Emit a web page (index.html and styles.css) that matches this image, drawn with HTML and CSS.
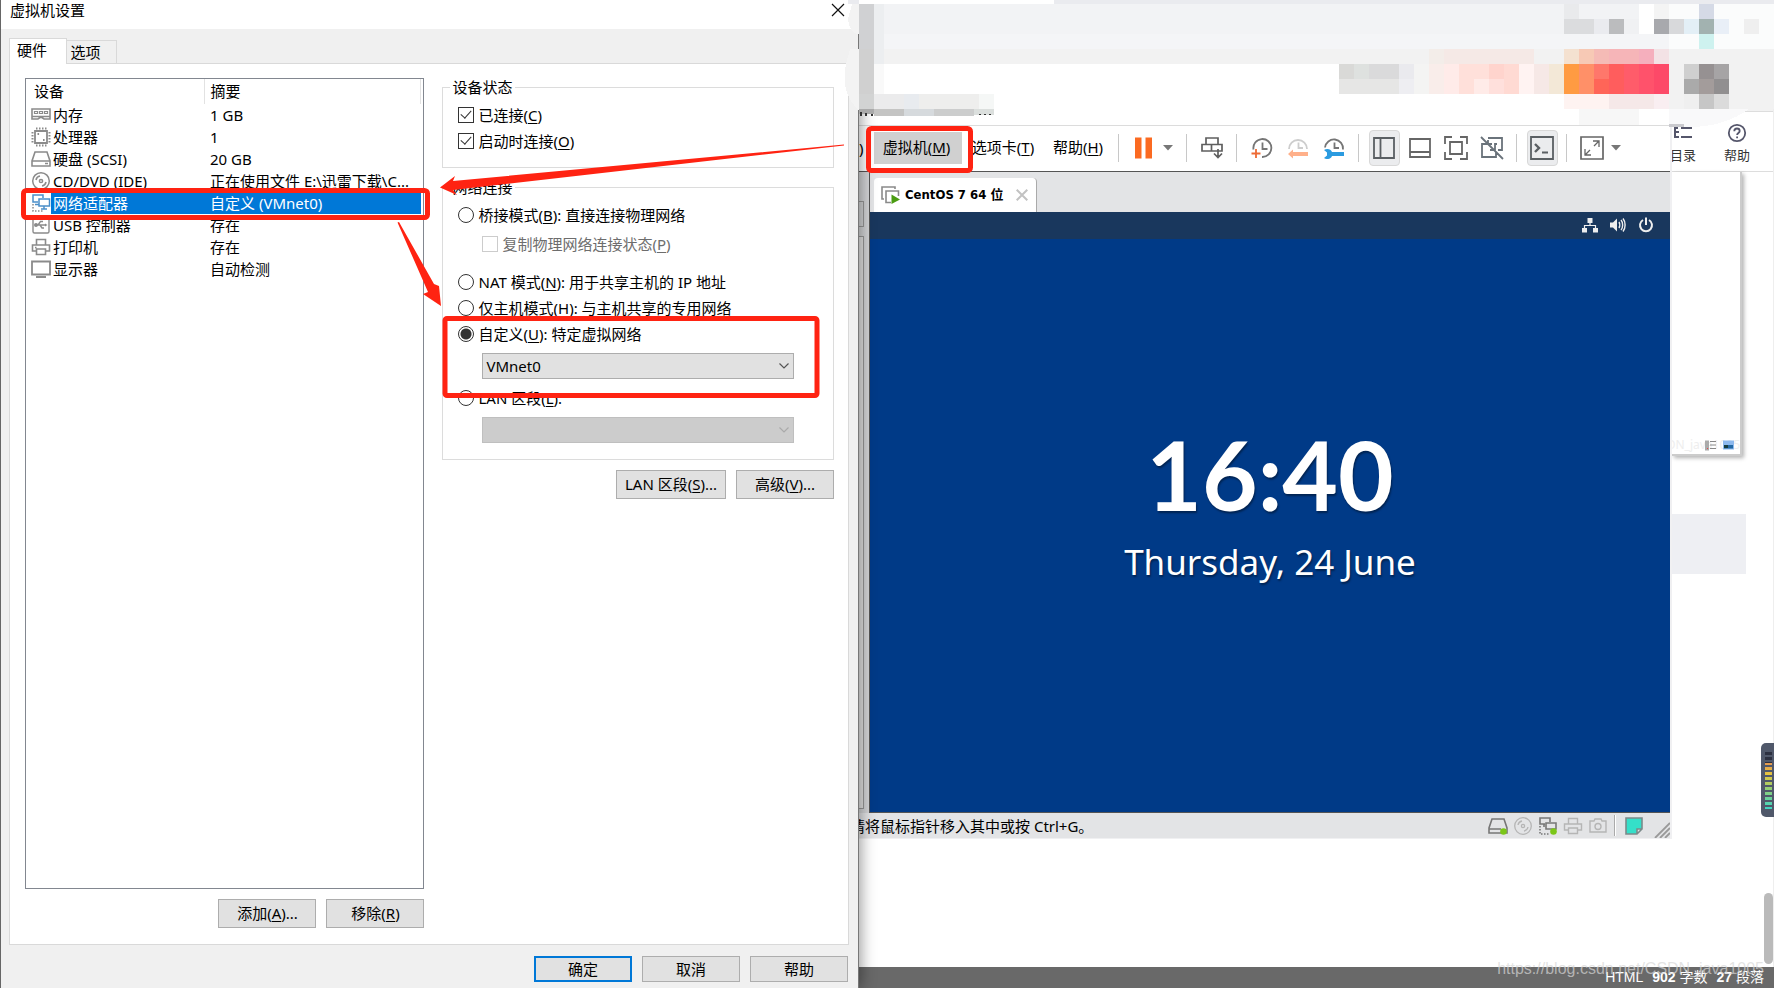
FILE: index.html
```html
<!DOCTYPE html>
<html lang="zh-CN">
<head>
<meta charset="utf-8">
<title>虚拟机设置</title>
<link rel="stylesheet" href="styles.css">
</head>
<body>
<div class="desktop">

<section class="dialog" aria-label="虚拟机设置">
  <header class="dialog-title">
    <span>虚拟机设置</span>
    <button class="close" type="button" aria-label="关闭"><svg width="14" height="14" viewBox="0 0 14 14" fill="none" stroke="#111" stroke-width="1.2"><path d="M1 1l12 12M13 1L1 13"/></svg></button>
  </header>
  <nav class="tabs">
    <button class="tab active" type="button">硬件</button>
    <button class="tab" type="button">选项</button>
  </nav>
  <div class="panel">
    <div class="devices">
      <div class="device-list">
        <table>
          <colgroup><col class="c-icon"><col class="c-name"><col></colgroup>
          <thead><tr><th colspan="2">设备</th><th>摘要</th></tr></thead>
          <tbody>
            <tr><td><svg width="20" height="20" viewBox="0 0 20 20" fill="none" stroke="#8b8b8b" stroke-width="1.6"><path d="M1 4h18v10h-6l-2-1.5H9L7 14H1zM1 11.5h18" /><path d="M3.5 6.5h3v2h-3zM8.5 6.5h3v2h-3zM13.5 6.5h3v2h-3z" stroke-width="1.2"/></svg></td><td>内存</td><td>1 GB</td></tr>
            <tr><td><svg width="20" height="20" viewBox="0 0 20 20" fill="none" stroke="#8b8b8b" stroke-width="1.8"><path d="M4 4h12v12H4z"/><path d="M5 1.5h11M5 18.5h11M1.5 5v11M18.5 5v11" stroke-dasharray="1.5 1.5" stroke-width="2"/><path d="M6.5 7h1.6M12 13h1.6"/></svg></td><td>处理器</td><td>1</td></tr>
            <tr><td><svg width="20" height="20" viewBox="0 0 20 20" fill="none" stroke="#8b8b8b" stroke-width="1.6"><path d="M4 3h12l3 9v5H1v-5zM1 12h18M14 14.5h3"/></svg></td><td>硬盘 (SCSI)</td><td>20 GB</td></tr>
            <tr><td><svg width="20" height="20" viewBox="0 0 20 20" fill="none" stroke="#8b8b8b" stroke-width="1.5"><circle cx="10" cy="10" r="8.3"/><circle cx="10" cy="10" r="1.6"/><path d="M5 9a5 5 0 0 1 4-4M15 11a5 5 0 0 1-4 4"/></svg></td><td>CD/DVD (IDE)</td><td>正在使用文件 E:\迅雷下载\C...</td></tr>
            <tr class="selected"><td><svg width="20" height="20" viewBox="0 0 20 20" fill="none" stroke="#4b8fc9" stroke-width="1.5"><path d="M7 9H2V2h10v3M4 11.5h4"/><path d="M8 6h10.500v7H8zM13 13v3M10 16h6"/><path d="M2 11v7h11" stroke="#8b8b8b" stroke-dasharray="1.5 1.500"/></svg></td><td>网络适配器</td><td>自定义 (VMnet0)</td></tr>
            <tr><td><svg width="20" height="20" viewBox="0 0 20 20" fill="none" stroke="#8b8b8b" stroke-width="1.4"><rect x="2" y="2" width="16" height="16" rx="1.5"/><path d="M4 10h11M7 10l2.500-3.500H12M9 10l2 3h2"/><path d="M14 8.500l2.500 1.500-2.500 1.500z" fill="#8b8b8b" stroke="none"/><circle cx="5" cy="10" r="1.300" fill="#8b8b8b"/></svg></td><td>USB 控制器</td><td>存在</td></tr>
            <tr><td><svg width="20" height="20" viewBox="0 0 20 20" fill="none" stroke="#8b8b8b" stroke-width="1.600"><path d="M5.500 8V2.500h9V8M5.500 14H1.500V8h17v6h-4M5.500 12h9v5.500h-9zM4 10.500h1.500"/></svg></td><td>打印机</td><td>存在</td></tr>
            <tr><td><svg width="20" height="20" viewBox="0 0 20 20" fill="none" stroke="#8b8b8b" stroke-width="1.800"><path d="M1 2.500h18v13H1zM5 18h10"/></svg></td><td>显示器</td><td>自动检测</td></tr>
          </tbody>
        </table>
      </div>
      <div class="row-end">
        <button class="btn tall" type="button">添加(<u>A</u>)...</button>
        <button class="btn tall" type="button">移除(<u>R</u>)</button>
      </div>
    </div>
    <div class="settings">
      <fieldset class="status-box">
        <legend>设备状态</legend>
        <label class="opt"><input type="checkbox" checked><span>已连接(<u>C</u>)</span></label>
        <label class="opt"><input type="checkbox" checked><span>启动时连接(<u>O</u>)</span></label>
      </fieldset>
      <fieldset class="net-box">
        <legend>网络连接</legend>
        <label class="opt"><input type="radio" name="net"><span>桥接模式(<u>B</u>): 直接连接物理网络</span></label>
        <label class="opt sub"><input type="checkbox" disabled><span>复制物理网络连接状态(<u>P</u>)</span></label>
        <label class="opt"><input type="radio" name="net"><span>NAT 模式(<u>N</u>): 用于共享主机的 IP 地址</span></label>
        <label class="opt"><input type="radio" name="net"><span>仅主机模式(<u>H</u>): 与主机共享的专用网络</span></label>
        <label class="opt"><input type="radio" name="net" checked><span>自定义(<u>U</u>): 特定虚拟网络</span></label>
        <div class="combo"><select aria-label="特定虚拟网络"><option>VMnet0</option></select><svg width="10" height="6" viewBox="0 0 10 6" fill="none" stroke="#555" stroke-width="1.200"><path d="M.5.5L5 5 9.500.5"/></svg></div>
        <label class="opt"><input type="radio" name="net"><span>LAN 区段(<u>L</u>):</span></label>
        <div class="combo"><select aria-label="LAN 区段" disabled><option></option></select><svg width="10" height="6" viewBox="0 0 10 6" fill="none" stroke="#aaa" stroke-width="1.200"><path d="M.5.5L5 5 9.500.5"/></svg></div>
      </fieldset>
      <div class="row-end">
        <button class="btn tall wide" type="button">LAN 区段(<u>S</u>)...</button>
        <button class="btn tall" type="button">高级(<u>V</u>)...</button>
      </div>
    </div>
  </div>
  <footer class="dialog-actions">
    <button class="btn default" type="button">确定</button>
    <button class="btn" type="button">取消</button>
    <button class="btn" type="button">帮助</button>
  </footer>
</section>

<section class="vm" aria-label="VMware Workstation">
  <div class="vm-title"></div>
  <div class="toolbar">
    <span class="clipped">)</span>
    <button class="menu open" type="button">虚拟机(<u>M</u>)</button>
    <button class="menu tabs-menu" type="button">选项卡(<u>T</u>)</button>
    <button class="menu help-menu" type="button">帮助(<u>H</u>)</button>
    <i class="sep"></i>
    <button class="tool" type="button" aria-label="暂停"><svg width="18" height="22" viewBox="0 0 18 22" fill="#fb6a21"><path d="M0 .5h6.500v21H0zM10.500.5H17v21h-6.500z"/></svg></button>
    <button class="drop" type="button" aria-label="电源菜单"><svg width="10" height="6" viewBox="0 0 10 6" fill="#777"><path d="M0 0h10L5 5.500z"/></svg></button>
    <i class="sep after-drop"></i>
    <button class="tool" type="button" aria-label="发送按键"><svg width="22" height="22" viewBox="0 0 22 22" fill="none" stroke="#5f5f5f" stroke-width="1.700"><path d="M5 1h12v6.500H5zM1 7.500h20V14H1zM10.500 7.500V14M17 12v8M13 16.500l4 4 4-4"/></svg></button>
    <i class="sep"></i>
    <button class="tool" type="button" aria-label="拍摄快照"><svg width="22" height="22" viewBox="0 0 22 22" fill="none" stroke="#757575" stroke-width="1.800"><path d="M2.500 12.500A9 9 0 1 1 11 20M11.500 5.500v6.500h5"/><path d="M5 12v9M.5 16.500h9" stroke="#ee6b35"/></svg></button>
    <button class="tool" type="button" aria-label="恢复快照"><svg width="22" height="22" viewBox="0 0 22 22" fill="none" stroke="#cdcdcd" stroke-width="1.800"><path d="M2 12a9 9 0 0 1 18 0M11.500 5.500V11h4.500"/><path d="M1 17l5-4.500V15h15v4H6v2.500z" fill="#ffb08a" stroke="none"/></svg></button>
    <button class="tool" type="button" aria-label="管理快照"><svg width="22" height="22" viewBox="0 0 22 22" fill="none" stroke="#757575" stroke-width="1.800"><path d="M2 10.500a9 9 0 0 1 18 2M11.500 5.500V11h4.500"/><path d="M1 13c3-2 7-1 8 2h12v4H9c-1 3-5 4-8 2l3-2.500v-3z" fill="#2b9be0" stroke="none"/></svg></button>
    <i class="sep"></i>
    <button class="tool" type="button" aria-label="显示库"><span class="pressed"><svg width="22" height="22" viewBox="0 0 22 22" fill="none" stroke="#5a5f63" stroke-width="1.800"><path d="M1 1h20v20H1zM7.500 1v20"/></svg></span></button>
    <button class="tool" type="button" aria-label="缩略图栏"><svg width="22" height="22" viewBox="0 0 22 22" fill="none" stroke="#666" stroke-width="1.800"><path d="M1 2h20v18H1zM1 15h20"/></svg></button>
    <button class="tool" type="button" aria-label="全屏"><svg width="24" height="24" viewBox="0 0 24 24" fill="none" stroke="#666" stroke-width="1.800"><path d="M1 8V1h7M16 1h7v7M23 16v7h-7M8 23H1v-7M6 6h12v12H6z"/></svg></button>
    <button class="tool" type="button" aria-label="Unity"><svg width="24" height="24" viewBox="0 0 24 24" fill="none" stroke="#6a737b" stroke-width="1.800"><path d="M8 2h14v12h-4M12 8H2v13h14v-5M8 4v3M10 14h5V8h2M1 1l22 22"/></svg></button>
    <i class="sep"></i>
    <button class="tool" type="button" aria-label="控制台"><span class="pressed"><svg width="24" height="24" viewBox="0 0 24 24" fill="none" stroke="#5a5f63" stroke-width="1.800"><path d="M1 1h22v22H1zM12 16.500h6"/><path d="M5 8l4 4-4 4" stroke-width="2.400"/></svg></span></button>
    <i class="sep"></i>
    <button class="tool" type="button" aria-label="拉伸"><svg width="24" height="24" viewBox="0 0 24 24" fill="none" stroke="#666" stroke-width="1.700"><path d="M1 1h22v22H1z"/><path d="M13 5h6v6M11 19H5v-6M19 5l-5 5M5 19l5-5" stroke-width="1.300"/></svg></button>
    <button class="drop" type="button" aria-label="拉伸菜单"><svg width="10" height="6" viewBox="0 0 10 6" fill="#777"><path d="M0 0h10L5 5.500z"/></svg></button>
  </div>
  <div class="vm-body">
    <div class="library"><div class="search"></div><div class="tree"></div></div>
    <div class="vm-main">
      <div class="vm-tabs">
        <div class="vm-tab">
          <svg width="20" height="18" viewBox="0 0 20 18" fill="none" stroke="#8a8a8a" stroke-width="1.600"><path d="M3 13H1V1h13v2"/><path d="M10 16.500H5V5h12.500v5"/><path d="M10.500 8.500l8.500 5-8.500 4.500z" fill="#4a9c12" stroke="none"/></svg>
          <span>CentOS 7 64 位</span>
          <button type="button" aria-label="关闭标签页"><svg width="12" height="12" viewBox="0 0 12 12" fill="none" stroke="#c2c2c2" stroke-width="2"><path d="M.7.7l10.600 10.600M11.300.7L.7 11.300"/></svg></button>
        </div>
      </div>
      <div class="screen">
        <div class="gnome-bar">
          <svg width="16" height="16" viewBox="0 0 16 16" fill="#eee"><path d="M5.500 1h5v5h-5zM0 11h5v4.500H0zM11 11h5v4.500h-5z"/><path d="M8 6v3M2.500 11V8.500h11V11" fill="none" stroke="#eee" stroke-width="1.200"/></svg>
          <svg width="16" height="16" viewBox="0 0 16 16" fill="#eee"><path d="M0 5.500h3l4-4v13l-4-4H0z"/><path d="M9 5c1 1.500 1 4.500 0 6M11 3c2.200 2.500 2.200 7.500 0 10M13 1.500c2.800 3.500 2.800 9.500 0 13" fill="none" stroke="#eee" stroke-width="1.400"/></svg>
          <svg width="16" height="16" viewBox="0 0 16 16" fill="none" stroke="#eee" stroke-width="2"><path d="M5 3a6 6 0 1 0 6 0M8 .5V8"/></svg>
        </div>
        <div class="lock">
          <div class="clock">16:40</div>
          <div class="date">Thursday, 24 June</div>
        </div>
      </div>
    </div>
  </div>
  <div class="status">
    <span class="hint">请将鼠标指针移入其中或按 Ctrl+G。</span>
    <div class="status-icons">
      <svg width="20" height="20" viewBox="0 0 20 20" fill="none" stroke="#777" stroke-width="1.600"><path d="M4 3h12l3 9v5H1v-5zM1 13h12"/><circle cx="15.500" cy="15.500" r="3.300" fill="#7bc618" stroke="none"/></svg>
      <svg width="20" height="20" viewBox="0 0 20 20" fill="none" stroke="#b5b5b5" stroke-width="1.300"><circle cx="10" cy="10" r="8.300"/><circle cx="10" cy="10" r="1.600"/><path d="M5 9a5 5 0 0 1 4-4M15 11a5 5 0 0 1-4 4"/></svg>
      <svg width="20" height="20" viewBox="0 0 20 20" fill="none" stroke="#777" stroke-width="1.600"><path d="M7 8H2V2h10v4M8 7h10v6H8zM6 11v-3"/><path d="M2 10v8h10" stroke-dasharray="1.500 1.500"/><circle cx="15.500" cy="15.500" r="3.300" fill="#7bc618" stroke="none"/></svg>
      <svg width="20" height="20" viewBox="0 0 20 20" fill="none" stroke="#b5b5b5" stroke-width="1.400"><path d="M5.500 8V2.500h9V8M5.500 14H1.500V8h17v6h-4M5.500 12h9v5.500h-9z"/></svg>
      <svg width="20" height="20" viewBox="0 0 20 20" fill="none" stroke="#b5b5b5" stroke-width="1.400"><path d="M2 5h4l1-2h6l1 2h4v11H2z"/><circle cx="10" cy="10.500" r="3"/></svg>
      <i></i>
      <svg width="20" height="20" viewBox="0 0 20 20" fill="#35dfc9" stroke="#7b8a8a" stroke-width="1.600"><path d="M2 2h16v11l-5 5H2zM18 13h-5v5"/></svg>
      <svg width="16" height="16" viewBox="0 0 16 16" fill="none" stroke="#999" stroke-width="1.800"><path d="M1 16L16 1M6 16L16 6M11 16l5-5"/></svg>
    </div>
  </div>
</section>

<aside class="editor">
  <div class="editor-head"></div>
  <div class="editor-tools">
    <a href="#toc" class="toc"><svg width="20" height="20" viewBox="0 0 20 20" fill="none" stroke="#55566b" stroke-width="2"><path d="M2 3v12M8 5h11M8 14h11M2 9h4M2 14h4M2 5h3"/></svg><span>目录</span></a>
    <a href="#help" class="help"><svg width="20" height="20" viewBox="0 0 20 20" fill="none" stroke="#55566b" stroke-width="1.800"><circle cx="10" cy="10" r="8.200"/><path d="M7.300 8.200c0-3.700 5.400-3.500 5.400-.2 0 2-2.600 2-2.600 4M10.100 13.400v1.800"/></svg><span>帮助</span></a>
  </div>
  <div class="preview">
    <span>CSDN_java1005</span>
    <svg width="30" height="11" viewBox="0 0 30 11"><path d="M0 .5h4v10H0z" fill="#aaa"/><path d="M2 8h1v1H2z" fill="#e44"/><path d="M5 1.500h6M5 5h6M5 8.500h6" stroke="#888"/><path d="M18 .5h11v9H18z" fill="#8db9ee"/><path d="M19 5h9v3.500h-9z" fill="#2469a5"/><path d="M19 5h4v3h-4z" fill="#173d40"/></svg>
  </div>
  <div class="quote"></div>
  <div class="meter"><i></i></div>
  <div class="thumb"></div>
</aside>

<footer class="page-status">
  <span>HTML</span><span><b>902</b> 字数</span><span><b>27</b> 段落</span>
  <div class="watermark">https://blog.csdn.net/CSDN_java1005</div>
</footer>

<svg class="mosaic" width="934" height="130" viewBox="840 0 934 130" shape-rendering="crispEdges" aria-hidden="true">
  <path d="M848 0h926v4H848z" fill="#eaebef"/><path d="M859 0h195v4H859zM859 94h826v15H859zM859 64h720v45H859z" fill="#fff"/>
  <path d="M848 19q2 15 11 15V4h-7zM846 64q-6 30 13 46V49h-9z" fill="#f3f3f3"/>
  <path d="M859 4h850v30H859z" fill="#f2f3f5"/><path d="M859 34h810v15H859z" fill="#f4f5f7"/><path d="M859 49h915v15H859z" fill="#f2f2f2"/>
  <path d="M1669 34h105v15h-105zM1639 4h135v30h-135z" fill="#fbfcfc"/>
  <path d="M859 4h15v45h-15z" fill="#d0d1d3"/><path d="M859 49h15v60h-15z" fill="#d0d0d0"/><path d="M874 4h10v60h-10z" fill="#eceef0"/><path d="M874 64h10v30h-10z" fill="#f9f9f9"/>
  <path d="M859 94h15v15h-15z" fill="#d2d3d3"/><path d="M874 94h30v15h-30z" fill="#ebebec"/><path d="M904 94h15v15h-15z" fill="#e8ebef"/><path d="M919 94h60v15h-60z" fill="#eeeeed"/><path d="M979 94h15v15h-15z" fill="#f5f7f6"/>
  <path d="M859 109h15v5h-15z" fill="#aaa"/><path d="M874 109h30v7h-30z" fill="#c4c4c3"/><path d="M904 109h30v7h-30z" fill="#d6dadd"/><path d="M934 109h40v7h-40z" fill="#cccdcd"/><path d="M974 109h20v6h-20z" fill="#dbdfdd"/>
  <path d="M860 112h2v4h-2zM865 113h2v3h-2zM871 114h2v2h-2zM979 114h2v1h-2zM984 114h2v1h-2zM989 114h2v1h-2z" fill="#333"/>
  <path d="M1339 64h15v15h-15z" fill="#d9d9d7"/><path d="M1354 64h15v15h-15z" fill="#dee1df"/><path d="M1369 64h30v15h-30z" fill="#dadadb"/><path d="M1399 64h15v15h-15z" fill="#eaeaee"/><path d="M1339 79h60v15h-60z" fill="#e6e6e5"/><path d="M1399 79h15v15h-15z" fill="#eeeef2"/><path d="M1414 64h15v30h-15z" fill="#f4f4f3"/>
  <path d="M1429 49h15v15h-15z" fill="#f3ede9"/><path d="M1444 49h90v15h-90z" fill="#f5e9e6"/><path d="M1429 64h15v30h-15z" fill="#f9edea"/><path d="M1444 64h15v30h-15z" fill="#ffebe9"/><path d="M1459 64h30v15h-30zM1459 79h15v15h-15z" fill="#ffe0da"/><path d="M1474 79h15v15h-15z" fill="#ffebe8"/><path d="M1489 64h15v15h-15z" fill="#ffd4cd"/><path d="M1504 64h15v30h-15z" fill="#ffdad3"/><path d="M1489 79h15v15h-15z" fill="#ffe0dc"/><path d="M1519 64h15v30h-15z" fill="#fff3f2"/><path d="M1534 64h15v30h-15z" fill="#f6e8e6"/><path d="M1549 64h15v30h-15z" fill="#f3e8d7"/>
  <path d="M1564 49h15v15h-15z" fill="#f4e1d0"/><path d="M1579 49h15v15h-15z" fill="#f7c9b5"/><path d="M1594 49h15v15h-15z" fill="#f5bbb6"/><path d="M1609 49h30v15h-30z" fill="#f6b5b8"/><path d="M1639 49h15v15h-15z" fill="#f5afbd"/><path d="M1654 49h15v15h-15z" fill="#f3e2e5"/>
  <path d="M1564 64h15v30h-15z" fill="#ff9b42"/><path d="M1579 64h15v30h-15z" fill="#ff9068"/><path d="M1594 64h15v15h-15z" fill="#ff776b"/><path d="M1594 79h15v15h-15z" fill="#ff6558"/><path d="M1609 64h15v30h-15z" fill="#ff5d5d"/><path d="M1624 64h15v30h-15z" fill="#ff5c6a"/><path d="M1639 64h15v30h-15z" fill="#ff526b"/><path d="M1654 64h15v30h-15z" fill="#fd4968"/>
  <path d="M1564 94h45v15h-45z" fill="#fef3f1"/><path d="M1609 94h45v15h-45z" fill="#f5e8e8"/><path d="M1654 94h15v15h-15z" fill="#f9eef1"/><path d="M1579 109h60v16h-60z" fill="#f7f7f7"/><path d="M1669 109h80q-25 18-60 18h-20z" fill="#f9f9fa"/>
  <path d="M1669 64h105v45h-105z" fill="#f2f2f2"/>
  <path d="M1564 4h15v15h-15z" fill="#e9eaec"/><path d="M1564 19h30v15h-30z" fill="#dbdcde"/><path d="M1594 19h15v15h-15z" fill="#eaebef"/><path d="M1609 19h15v15h-15z" fill="#bbbcbe"/><path d="M1624 19h15v15h-15z" fill="#f0f1f3"/><path d="M1639 4h15v30h-15z" fill="#fff"/><path d="M1654 4h15v15h-15z" fill="#f4f4f4"/><path d="M1654 19h15v15h-15z" fill="#a8a9ad"/><path d="M1669 19h15v15h-15z" fill="#d8d9db"/><path d="M1684 19h15v15h-15z" fill="#e3eff6"/><path d="M1699 4h15v15h-15z" fill="#d5dae6"/><path d="M1699 19h15v15h-15z" fill="#a2b2b0"/><path d="M1699 34h15v15h-15z" fill="#cef2ef"/><path d="M1714 19h15v15h-15z" fill="#e9eff7"/><path d="M1744 19h15v15h-15z" fill="#efefef"/>
  <path d="M1684 64h15v15h-15z" fill="#cfcfcf"/><path d="M1699 64h15v15h-15z" fill="#969192"/><path d="M1714 64h15v15h-15z" fill="#a6a4a5"/><path d="M1684 79h15v15h-15z" fill="#aaa"/><path d="M1699 79h15v15h-15z" fill="#a39c9b"/><path d="M1714 79h15v15h-15z" fill="#918f90"/><path d="M1684 94h15v15h-15z" fill="#efefef"/><path d="M1699 94h15v15h-15z" fill="#c6c6c6"/><path d="M1714 94h15v15h-15z" fill="#dbdbdb"/><path d="M1669 124h15v3h-15z" fill="#cacace"/>
</svg>

<svg class="marks" width="980" height="410" viewBox="0 0 980 410" fill="none" stroke="#ff2312" stroke-width="5" aria-hidden="true">
  <rect x="23.500" y="190.500" width="404" height="27" rx="3"/>
  <rect x="445" y="318.500" width="372" height="77" rx="2"/>
  <rect x="868.500" y="128.500" width="102" height="42" rx="3"/>
  <path d="M440 187.500L455 176l-2 5 391-36.500v1L453 190l4 5zM397.500 222.500L399 222l35 62 5 2 2 20-18-12 5-2z" fill="#ff2312" stroke="none"/>
</svg>
</div>
</body>
</html>
```
FILE: styles.css
```css
* { box-sizing: border-box; }
body {
  margin: 0;
  font: 15px/20px "Noto Sans", "Noto Sans CJK SC", sans-serif;
  color: #000;
  background: #fff;
}
button, select { font: inherit; color: inherit; }
button { border: 0; padding: 0; background: none; }
svg { display: block; flex: none; }
a { color: inherit; text-decoration: none; }
u { text-underline-offset: 2px; text-decoration-thickness: 1px; }

.desktop {
  position: relative;
  display: grid;
  grid-template-columns: 859fr 813fr 102fr;
  grid-template-rows: 1fr 21px;
  min-height: 100vh;
  overflow: hidden;
}

/* Settings dialog */
.dialog {
  grid-row: 1 / 3;
  z-index: 3;
  display: flex;
  flex-direction: column;
  min-width: 0;
  background: #f0f0f0;
  border-left: 1px solid #666;
  border-right: 1px solid #777;
  box-shadow: 2px 0 14px rgba(0, 0, 0, .4);
}
.dialog-title {
  display: flex;
  justify-content: space-between;
  align-items: center;
  height: 29px;
  padding: 0 13px 9px 9px;
  background: #fff;
}
.tabs { display: flex; align-items: flex-end; padding: 9px 8px 0; }
.tab {
  width: 50px;
  height: 23px;
  border: 1px solid #d9d9d9;
  border-width: 1px 1px 0 0;
  padding-right: 12px;
}
.tab.active {
  width: 58px;
  height: 26px;
  margin-bottom: -1px;
  border-width: 1px 1px 0 1px;
  padding: 0 12px 4px 0;
  background: #fff;
  z-index: 1;
}
.panel {
  flex: 1;
  display: grid;
  grid-template-columns: 400fr 392fr;
  gap: 18px;
  margin: 0 9px 0 8px;
  padding: 14px 14px 16px 15px;
  background: #fff;
  border: 1px solid #d9d9d9;
}
.devices { display: flex; flex-direction: column; gap: 10px; min-width: 0; }
.device-list { flex: 1; border: 1px solid #828790; padding-right: 2px; }
table { width: 100%; table-layout: fixed; border-collapse: collapse; }
.c-icon { width: 25px; }
.c-name { width: 153px; }
th { height: 25px; padding: 0 0 1px 8px; text-align: left; font-weight: 400; border-right: 1px solid #e2e2e2; }
th + th { padding-left: 6px; }
td { height: 22px; padding: 0 0 1px 2px; white-space: nowrap; overflow: hidden; }
td:first-child { padding-left: 5px; }
td:last-child { padding-left: 6px; }
.selected td + td { background: #0078d7; color: #fff; }
.row-end { display: flex; justify-content: flex-end; gap: 10px; }
.btn {
  width: 98px;
  height: 26px;
  padding-bottom: 1px;
  background: #e1e1e1;
  border: 1px solid #adadad;
}
.btn.tall { height: 29px; padding-bottom: 2px; }
.btn.wide { width: 110px; }
.btn.default { border: 2px solid #0078d7; }

.settings { min-width: 0; }
fieldset { margin: 0; border: 1px solid #dcdcdc; min-width: 0; }
legend { padding: 0 2px; line-height: 20px; }
.status-box { margin-top: -1px; padding: 5px 15px 13px 7px; }
.net-box { margin: 9px 0 10px; padding: 5px 39px 16px 7px; }
.opt { display: flex; align-items: center; gap: 4px; height: 26px; padding-left: 8px; white-space: nowrap; }
.opt span { padding-bottom: 1px; }
.opt.sub { height: 32px; margin-bottom: 9px; padding-left: 32px; color: #6d6d6d; }
.opt input {
  appearance: none;
  position: relative;
  flex: none;
  width: 16px;
  height: 16px;
  margin: 0;
  border: 1px solid #333;
  background: #fff;
}
.opt input:disabled { border-color: #ccc; }
.opt input[type=radio] { border-radius: 50%; }
.opt input[type=radio]:checked { background: radial-gradient(circle, #333 5px, #fff 6px); }
.opt input[type=checkbox]:checked::after {
  content: "";
  position: absolute;
  left: 4px;
  top: 0;
  width: 5px;
  height: 9px;
  border: solid #333;
  border-width: 0 1px 1px 0;
  rotate: 42deg;
}
.combo { position: relative; margin: 6px 0 6px 32px; }
.combo:last-child { margin-bottom: 0; }
select {
  display: block;
  appearance: none;
  width: 100%;
  height: 26px;
  padding: 0 3px;
  background: #e1e1e1;
  border: 1px solid #adadad;
  border-radius: 0;
}
select:disabled { background: #ccc; border-color: #bfbfbf; opacity: 1; }
.combo svg { position: absolute; right: 5px; top: 10px; pointer-events: none; }
.dialog-actions { display: flex; justify-content: flex-end; gap: 10px; padding: 11px 10px 6px; }

/* Virtual machine window */
.vm {
  z-index: 2;
  display: flex;
  flex-direction: column;
  min-width: 0;
  margin-bottom: 128px;
  background: #e3e4e6;
  border: solid #f0f0f2;
  border-width: 0 2px 1px 0;
}
.vm-title { height: 126px; background: #fff; border-bottom: 1px solid #dcdcdc; }
.toolbar { display: flex; align-items: center; height: 46px; padding-bottom: 2px; background: #fff; border-bottom: 1px solid #555; white-space: nowrap; }
.clipped { width: 15px; }
.menu { flex: none; height: 32px; width: 88px; padding-bottom: 2px; }
.menu.open { background: #d0d0d0; padding-right: 11px; padding-left: 8px; }
.menu.tabs-menu { width: 82px; }
.menu.help-menu { width: 68px; }
.sep { flex: none; width: 1px; height: 28px; margin: 0 7px 0 6px; background: #c8c8c8; }
.sep.after-drop { margin-left: 12px; }
.tool { flex: none; display: grid; place-items: center; width: 36px; height: 36px; }
.pressed { display: grid; place-items: center; width: 31px; height: 36px; background: #ebecee; border: 1px solid #d8d8d8; border-radius: 4px; }
.drop { flex: none; display: grid; place-items: center; width: 12px; }
.drop svg { width: 10px; }
.vm-body { flex: 1; display: flex; min-height: 0; }
.library { flex: none; display: flex; flex-direction: column; gap: 9px; width: 11px; padding: 29px 5px 4px 0; background: #d3d4d6; border-right: 1px solid #555; }
.search { height: 26px; border: 1px solid #999; border-left: 0; }
.tree { flex: 1; border: 1px solid #999; border-left: 0; background: #e3e3e3; }
.vm-main { flex: 1; display: flex; flex-direction: column; min-width: 0; }
.vm-tabs { display: flex; height: 40px; padding: 6px 4px 0; }
.vm-tab { display: flex; align-items: center; width: 163px; padding: 0 8px 0 7px; background: #fff; border-right: 1px solid #aaa; border-radius: 4px 4px 0 0; font: bold 13px/20px "DejaVu Sans Condensed", "DejaVu Sans", "Noto Sans CJK SC", sans-serif; font-stretch: condensed; white-space: nowrap; }
.vm-tab span { margin: 0 auto 0 4px; }
.screen { flex: 1; display: flex; flex-direction: column; background: #003a87; border-bottom: 1px solid #555; color: #fff; }
.gnome-bar { display: flex; justify-content: flex-end; align-items: center; gap: 12px; height: 27px; padding: 0 16px 2px 0; background: #19375d; }
.lock { flex: 1; display: flex; flex-direction: column; align-items: center; justify-content: center; gap: 14px; padding-bottom: 42px; text-shadow: 1px 2px 2px rgba(0, 0, 0, .4); }
.clock { font: bold 96px/100px Lato, sans-serif; }
.date { font: 35px/48px "Noto Sans", sans-serif; }
.status { display: flex; justify-content: space-between; height: 25px; overflow: hidden; font: 15px/26px "Noto Sans", "Noto Sans CJK SC", sans-serif; }
.hint { margin-left: -9px; white-space: nowrap; }
.status-icons { display: flex; align-items: center; gap: 5px; }
.status-icons i { width: 2px; height: 21px; margin: 0 3px 0 1px; background: #aaa; border-right: 1px solid #fff; }
.status-icons svg:last-child { align-self: flex-end; margin-left: 5px; }

/* Editor page behind the windows */
.editor { position: relative; display: flex; flex-direction: column; border-right: 1px solid #eee; }
.editor-head { height: 112px; background: #f2f2f2; border-bottom: 1px solid #ddd; }
.editor-tools { display: flex; gap: 28px; height: 60px; padding-top: 11px; border-bottom: 1px solid #ddd; font-size: 13px; line-height: 18px; color: #333; }
.editor-tools a { display: flex; flex-direction: column; align-items: center; gap: 3px; width: 26px; white-space: nowrap; }
.toc { margin-left: -2px; }
.preview { display: flex; align-items: flex-end; height: 284px; width: 70px; padding-bottom: 3px; border: solid #ccc; border-width: 0 2px 2px 0; box-shadow: 2px 2px 4px rgba(0, 0, 0, .3); }
.preview span { display: flex; justify-content: flex-end; width: 68px; line-height: 12px; font-size: 12px; color: #eee; }
.preview svg { margin-left: -35px; z-index: 1; }
.quote { height: 60px; width: 74px; margin-top: 58px; background: #eeeff3; }
.meter { position: absolute; right: -1px; top: 743px; width: 13px; height: 74px; padding: 9px 2px 8px 4px; background: #50586a; border-radius: 5px 0 0 5px; }
.meter i { display: block; height: 100%; background: repeating-linear-gradient(transparent 0 3px, #50586a 3px 5px), linear-gradient(#2c3040 0 20%, #e69a50 20%, #e5c73f 40%, #91cf76 65%, #3fd6c3); }
.thumb { position: absolute; right: 0; top: 893px; width: 9px; height: 71px; border-radius: 5px; background: #bababa; }

.page-status { position: relative; grid-column: 2 / 4; display: flex; justify-content: flex-end; gap: 9px; padding-right: 10px; background: #696969; color: #fff; font: 14px/20px "Liberation Sans", "Noto Sans CJK SC", sans-serif; }
.watermark { position: absolute; right: 10px; top: -8px; font-size: 16px; color: rgba(215, 215, 215, .7); }

.mosaic, .marks { position: absolute; top: 0; pointer-events: none; }
.mosaic { right: 0; z-index: 4; }
.marks { left: 0; z-index: 5; }
```
